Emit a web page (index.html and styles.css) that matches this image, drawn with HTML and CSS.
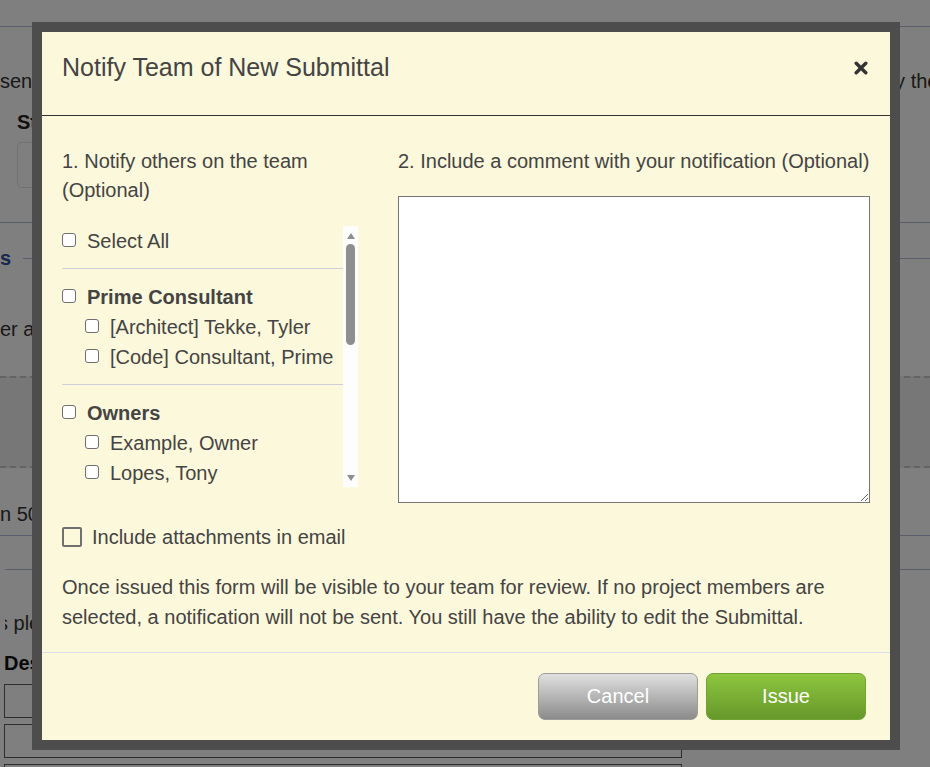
FILE: index.html
```html
<!DOCTYPE html>
<html lang="en">
<head>
<meta charset="utf-8">
<title>Notify Team of New Submittal</title>
<link rel="stylesheet" href="styles.css">
</head>
<body>
<div class="page">
  <div class="topbar"></div>
  <div class="intro">
    <span class="intro-left">sent to every member of the project team once the submittal has been issued and reviewed</span>
    <span class="intro-right">by the project administrator.</span>
  </div>
  <div class="field-label">Status</div>
  <div class="field-input"></div>
  <div class="section">
    <div class="section-head"><span class="section-title">s</span></div>
    <div class="section-text">er a file or drag it into the box below to attach it to this submittal.</div>
    <div class="dropzone"></div>
    <div class="hint">n 50 MB will not be uploaded.</div>
  </div>
  <div class="rule"></div>
  <div class="subsection">
    <div class="note">s please describe each item included with this submittal.</div>
    <div class="desc-label">Description</div>
    <div class="desc-input"></div>
    <div class="desc-input"></div>
    <div class="desc-input"></div>
  </div>
</div>

<div class="backdrop"></div>

<div class="modal" role="dialog" aria-labelledby="modal-title">
  <div class="modal-header">
    <h4 class="modal-title" id="modal-title">Notify Team of New Submittal</h4>
    <button class="close" type="button" aria-label="Close">
      <svg width="14" height="14" viewBox="0 0 14 14" aria-hidden="true"><path d="M2.2 2.2 L11.8 11.8 M11.8 2.2 L2.2 11.8" stroke="#333" stroke-width="3.4" stroke-linecap="round"/></svg>
    </button>
  </div>
  <div class="modal-body">
    <div class="columns">
      <div class="col-left">
        <div class="step">1. Notify others on the team (Optional)</div>
        <div class="list-box">
          <div class="member-list">
            <label class="row"><input type="checkbox" class="cb"><span>Select All</span></label>
            <div class="group">
              <label class="row group-name"><input type="checkbox" class="cb"><span>Prime Consultant</span></label>
              <label class="row member"><input type="checkbox" class="cb"><span>[Architect] Tekke, Tyler</span></label>
              <label class="row member"><input type="checkbox" class="cb"><span>[Code] Consultant, Prime</span></label>
            </div>
            <div class="group">
              <label class="row group-name"><input type="checkbox" class="cb"><span>Owners</span></label>
              <label class="row member"><input type="checkbox" class="cb"><span>Example, Owner</span></label>
              <label class="row member"><input type="checkbox" class="cb"><span>Lopes, Tony</span></label>
              <label class="row member"><input type="checkbox" class="cb"><span>Smith, Jordan</span></label>
            </div>
            <div class="group">
              <label class="row group-name"><input type="checkbox" class="cb"><span>Contractor</span></label>
              <label class="row member"><input type="checkbox" class="cb"><span>Builder, General</span></label>
              <label class="row member"><input type="checkbox" class="cb"><span>Garcia, Maria</span></label>
            </div>
          </div>
          <div class="scrollbar" aria-hidden="true">
            <span class="arrow arrow-up"></span>
            <span class="thumb"></span>
            <span class="track-rest"></span>
            <span class="arrow arrow-down"></span>
          </div>
        </div>
      </div>
      <div class="col-right">
        <div class="step">2. Include a comment with your notification (Optional)</div>
        <textarea class="comment" aria-label="Comment"></textarea>
      </div>
    </div>
    <label class="attach"><input type="checkbox" class="cb-lg"><span>Include attachments in email</span></label>
    <p class="notice">Once issued this form will be visible to your team for review. If no project members are selected, a notification will not be sent. You still have the ability to edit the Submittal.</p>
  </div>
  <div class="modal-footer">
    <button class="btn btn-cancel" type="button">Cancel</button>
    <button class="btn btn-issue" type="button">Issue</button>
  </div>
</div>
</body>
</html>
```

FILE: styles.css
```css
html, body {
  margin: 0;
  padding: 0;
}

body {
  background: #ffffff;
  font-family: "Liberation Sans", Arial, sans-serif;
  font-size: 20px;
  color: #333;
  overflow: hidden;
  height: 767px;
}

/* ---------- background page ---------- */
.page {
  width: 930px;
}

.topbar {
  height: 26px;
  border-bottom: 1px solid #b5bad6;
}

.intro {
  margin-top: 39px;
  line-height: 30px;
  display: grid;
  grid-template-columns: 884px 1fr;
  white-space: nowrap;
  overflow: hidden;
}

.intro span {
  overflow: hidden;
}

.field-label {
  margin: 11px 0 0 17px;
  line-height: 30px;
  font-weight: bold;
  color: #222;
}

.field-input {
  margin: 5px 0 0 17px;
  width: 420px;
  height: 46px;
  box-sizing: border-box;
  border: 1px solid #e4e4e4;
  border-radius: 5px;
}

.section {
  margin-top: 34px;
  border-top: 1px solid #b5bad6;
}

.section-head {
  margin-top: 20px;
  height: 30px;
  display: flex;
  align-items: center;
}

.section-head::after {
  content: "";
  flex: 1;
  height: 1px;
  margin-left: 12px;
  background: #b5bad6;
}

.section-title {
  color: #2f4f9a;
  font-weight: bold;
}

.section-text {
  margin-top: 41px;
  line-height: 30px;
  white-space: nowrap;
}

.dropzone {
  margin-top: 32px;
  height: 92px;
  box-sizing: border-box;
  border-top: 2px dashed #c6c6c6;
  border-bottom: 2px dashed #c6c6c6;
  background: #eeeeee;
}

.hint {
  margin-top: 31px;
  line-height: 30px;
  white-space: nowrap;
}

.rule {
  margin-top: 6px;
  border-top: 1px solid #b5bad6;
}

.subsection {
  margin: 33px 0 0 5px;
  border-top: 1px solid #b5bad6;
}

.note {
  margin-top: 38px;
  line-height: 30px;
  white-space: nowrap;
  text-indent: -7px;
  overflow: hidden;
}

.desc-label {
  margin: 10px 0 0 -1px;
  line-height: 30px;
  font-weight: bold;
  color: #111;
}

.desc-input {
  margin: 6px 0 0 -1px;
  width: 678px;
  height: 34px;
  box-sizing: border-box;
  border: 1px solid #5a5a5a;
}

/* ---------- overlay ---------- */
.backdrop {
  position: fixed;
  inset: 0;
  background: rgba(0, 0, 0, 0.5);
}

.modal {
  position: fixed;
  top: 22px;
  left: 32px;
  width: 868px;
  box-sizing: border-box;
  border: 10px solid #4d4d4d;
  background: #fcf8db;
  color: #444;
}

.modal-header {
  display: flex;
  align-items: center;
  justify-content: space-between;
  padding: 17px 22px 29px 20px;
  border-bottom: 1px solid #333;
}

.modal-title {
  margin: 0;
  font-size: 25px;
  font-weight: normal;
  line-height: 37px;
  color: #444;
}

.close {
  display: flex;
  padding: 0;
  border: 0;
  background: transparent;
  cursor: pointer;
}

.modal-body {
  padding: 31px 20px 20px;
}

.columns {
  display: grid;
  grid-template-columns: 296px 1fr;
  column-gap: 40px;
  align-items: start;
}

.step {
  line-height: 29.4px;
  margin-bottom: 20px;
}

.list-box {
  display: flex;
  height: 261px;
}

.member-list {
  flex: 1;
  min-width: 0;
  overflow: hidden;
}

.scrollbar {
  width: 15px;
  flex: none;
  display: flex;
  flex-direction: column;
  align-items: center;
  background: #fdfdfd;
}

.arrow {
  width: 0;
  height: 0;
  border-left: 4.5px solid transparent;
  border-right: 4.5px solid transparent;
}

.arrow-up {
  margin: 7px 0 4px;
  border-bottom: 6px solid #8e8e8e;
}

.arrow-down {
  margin: 4px 0 6px;
  border-top: 6px solid #8e8e8e;
}

.thumb {
  width: 9px;
  height: 101px;
  margin-top: 1px;
  border-radius: 5px;
  background: #8e8e8e;
}

.track-rest {
  flex: 1;
}

.row {
  display: flex;
  align-items: center;
  height: 30px;
  line-height: 30px;
  white-space: nowrap;
  cursor: pointer;
}

.cb {
  appearance: none;
  -webkit-appearance: none;
  width: 14px;
  height: 14px;
  margin: -1px 11px 0 0;
  box-sizing: border-box;
  border: 1px solid #6f6f6f;
  border-radius: 3px;
  background: #fff;
  flex: none;
}

.group {
  margin-top: 12px;
  padding-top: 13px;
  border-top: 1px solid #cfcfd6;
}

.group-name {
  font-weight: bold;
}

.member {
  padding-left: 23px;
}

.comment {
  display: block;
  width: 100%;
  height: 307px;
  box-sizing: border-box;
  margin: 0;
  border: 1px solid #767676;
  background: #fff;
  font: inherit;
}

.attach {
  display: flex;
  align-items: center;
  margin-top: 19px;
  line-height: 30px;
  cursor: pointer;
}

.cb-lg {
  appearance: none;
  -webkit-appearance: none;
  width: 20px;
  height: 20px;
  margin: -1px 10px 0 0;
  box-sizing: border-box;
  border: 2px solid #707070;
  border-radius: 2px;
  background: transparent;
}

.notice {
  margin: 20px 0 0;
  line-height: 30px;
}

.modal-footer {
  display: flex;
  justify-content: flex-end;
  gap: 8px;
  padding: 20px 24px 20px;
  border-top: 1px solid #d9dfe9;
}

.btn {
  width: 160px;
  height: 47px;
  border-radius: 7px;
  font-family: "Liberation Sans", Arial, sans-serif;
  font-size: 20px;
  color: #fff;
  cursor: pointer;
}

.btn-cancel {
  border: 1px solid #9c9c9c;
  background: linear-gradient(to bottom, #e0e0e0, #8b8b8b);
}

.btn-issue {
  border: 1px solid #6fa332;
  background: linear-gradient(to bottom, #8ec63f, #66982a);
}
```
